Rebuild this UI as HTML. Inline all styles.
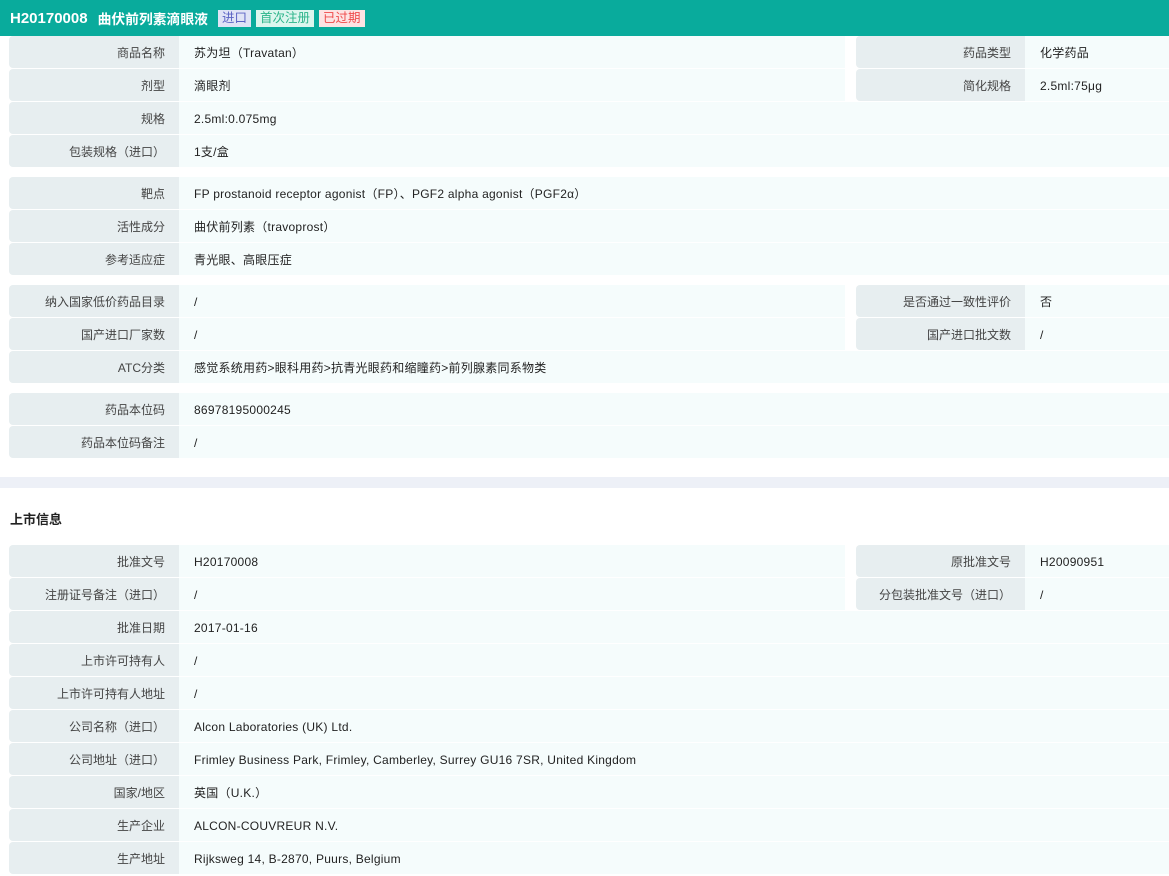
<!DOCTYPE html>
<html><head><meta charset="utf-8"><style>
*{margin:0;padding:0;box-sizing:border-box}
body{width:1169px;height:869px;overflow:hidden;background:#fff;font-family:"Liberation Sans","Noto Sans CJK SC",sans-serif;font-size:12px;color:#333}
.hd{height:36px;background:#09ab9c;color:#fff;display:flex;align-items:center;padding-left:10px;font-weight:bold;font-size:15px}
.hd .t2{margin-left:10px;font-size:13.8px}
.tag{font-weight:normal;font-size:12.5px;padding:0 4px;height:17px;line-height:17px;margin-left:5px}
.g{position:absolute;left:9px;right:0}
.r{height:32px;margin-bottom:1px;display:flex;line-height:34px}
.l{width:170px;background:#e7eef0;text-align:right;padding-right:14px;border-radius:4px 0 0 4px;color:#444}
.v{flex:1;background:#f5fcfc;padding-left:15px;color:#222;letter-spacing:0.25px}
.v1{width:666px;flex:none}
.gap{width:11px;background:#fff}
.l2{width:169px}
.sep{position:absolute;left:0;right:0;top:477px;height:11px;background:#edf0f7}
.h2{position:absolute;left:10px;top:509px;font-weight:bold;font-size:13px;color:#222}
</style></head><body>
<div class="hd">H20170008<span class="t2">曲伏前列素滴眼液</span>
<span class="tag" style="background:#e0e3f6;color:#5c63c4;margin-left:10px">进口</span>
<span class="tag" style="background:#dcf6ee;color:#2bb48a">首次注册</span>
<span class="tag" style="background:#fde3e3;color:#ee4a4a">已过期</span></div>

<div class="g" style="top:36px">
<div class="r"><div class="l">商品名称</div><div class="v v1">苏为坦（Travatan）</div><div class="gap"></div><div class="l l2">药品类型</div><div class="v">化学药品</div></div>
<div class="r"><div class="l">剂型</div><div class="v v1">滴眼剂</div><div class="gap"></div><div class="l l2">简化规格</div><div class="v">2.5ml:75μg</div></div>
<div class="r"><div class="l">规格</div><div class="v">2.5ml:0.075mg</div></div>
<div class="r"><div class="l">包装规格（进口）</div><div class="v">1支/盒</div></div>
</div>
<div class="g" style="top:177px">
<div class="r"><div class="l">靶点</div><div class="v">FP prostanoid receptor agonist（FP）、PGF2 alpha agonist（PGF2α）</div></div>
<div class="r"><div class="l">活性成分</div><div class="v">曲伏前列素（travoprost）</div></div>
<div class="r"><div class="l">参考适应症</div><div class="v">青光眼、高眼压症</div></div>
</div>
<div class="g" style="top:285px">
<div class="r"><div class="l">纳入国家低价药品目录</div><div class="v v1">/</div><div class="gap"></div><div class="l l2">是否通过一致性评价</div><div class="v">否</div></div>
<div class="r"><div class="l">国产进口厂家数</div><div class="v v1">/</div><div class="gap"></div><div class="l l2">国产进口批文数</div><div class="v">/</div></div>
<div class="r"><div class="l">ATC分类</div><div class="v">感觉系统用药&gt;眼科用药&gt;抗青光眼药和缩瞳药&gt;前列腺素同系物类</div></div>
</div>
<div class="g" style="top:393px">
<div class="r"><div class="l">药品本位码</div><div class="v">86978195000245</div></div>
<div class="r"><div class="l">药品本位码备注</div><div class="v">/</div></div>
</div>
<div class="sep"></div>
<div class="h2">上市信息</div>
<div class="g" style="top:545px">
<div class="r"><div class="l">批准文号</div><div class="v v1">H20170008</div><div class="gap"></div><div class="l l2">原批准文号</div><div class="v">H20090951</div></div>
<div class="r"><div class="l">注册证号备注（进口）</div><div class="v v1">/</div><div class="gap"></div><div class="l l2">分包装批准文号（进口）</div><div class="v">/</div></div>
<div class="r"><div class="l">批准日期</div><div class="v">2017-01-16</div></div>
<div class="r"><div class="l">上市许可持有人</div><div class="v">/</div></div>
<div class="r"><div class="l">上市许可持有人地址</div><div class="v">/</div></div>
<div class="r"><div class="l">公司名称（进口）</div><div class="v">Alcon Laboratories (UK) Ltd.</div></div>
<div class="r"><div class="l">公司地址（进口）</div><div class="v">Frimley Business Park, Frimley, Camberley, Surrey GU16 7SR, United Kingdom</div></div>
<div class="r"><div class="l">国家/地区</div><div class="v">英国（U.K.）</div></div>
<div class="r"><div class="l">生产企业</div><div class="v">ALCON-COUVREUR N.V.</div></div>
<div class="r"><div class="l">生产地址</div><div class="v">Rijksweg 14, B-2870, Puurs, Belgium</div></div>
</div>
</body></html>
